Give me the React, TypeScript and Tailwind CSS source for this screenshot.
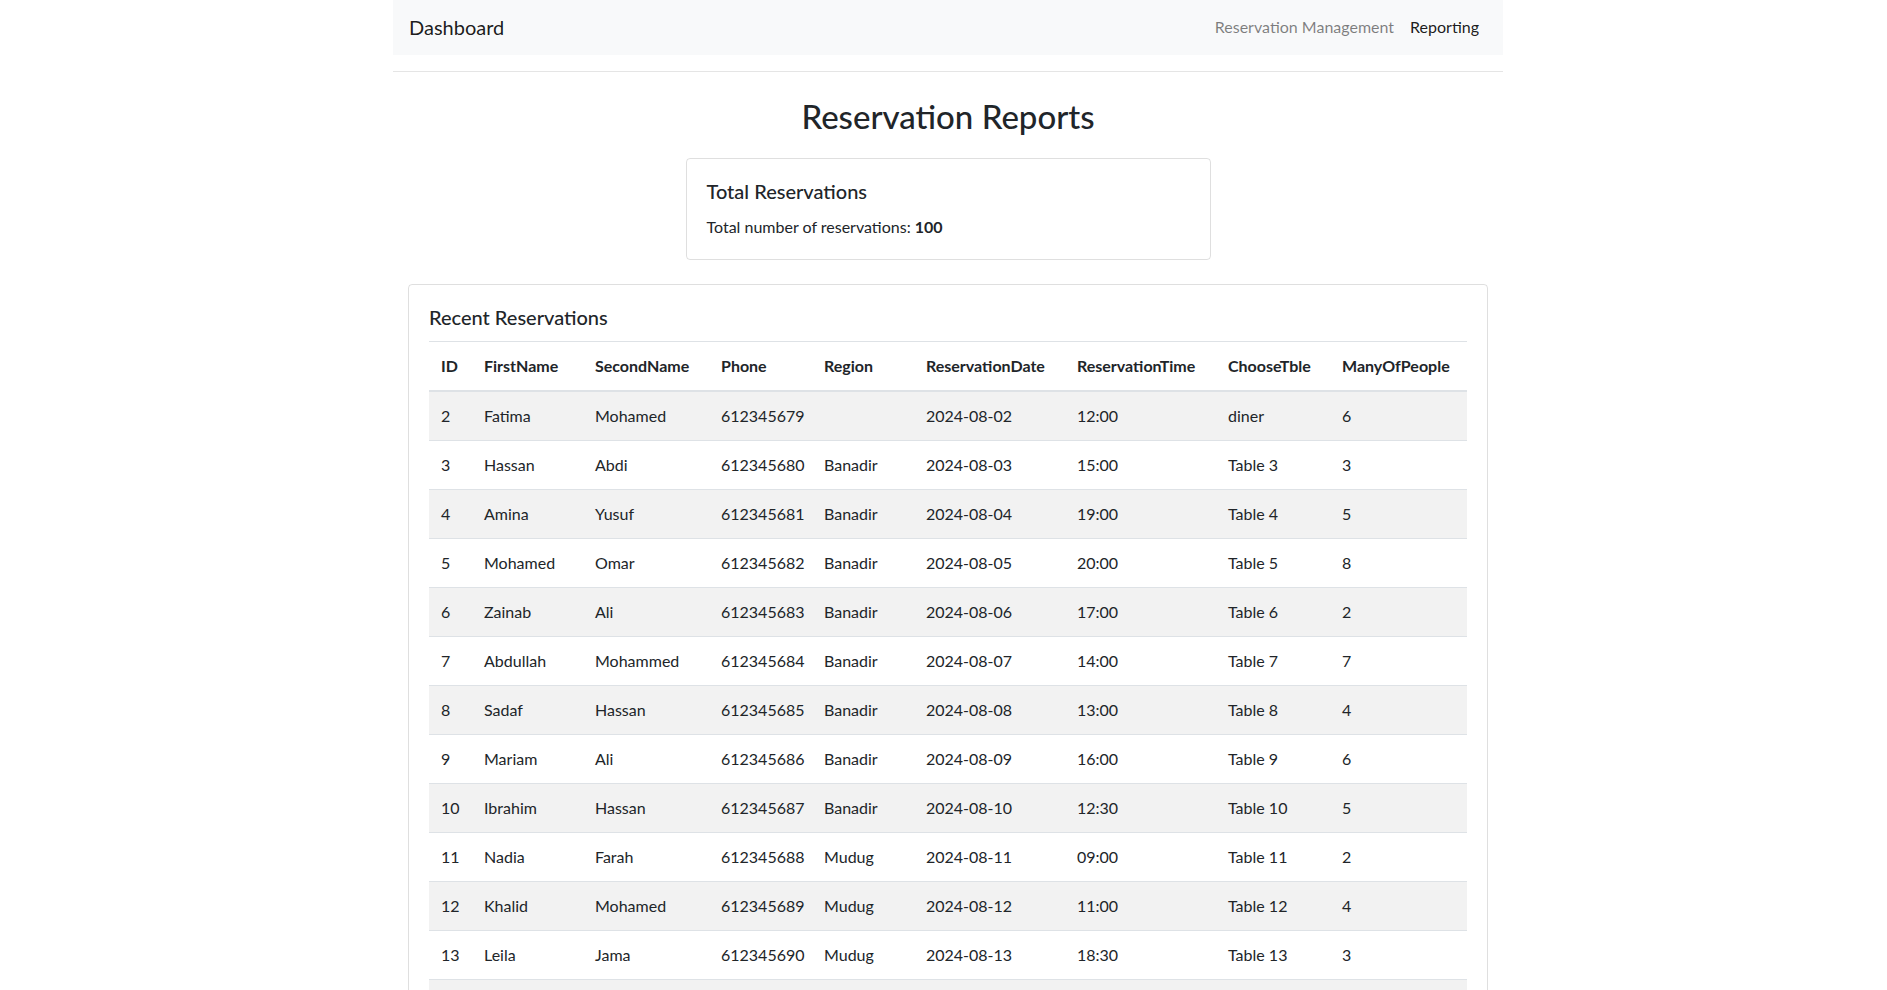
const ROWS = [
    ['2', 'Fatima', 'Mohamed', '612345679', '', '2024-08-02', '12:00', 'diner', '6'],
    ['3', 'Hassan', 'Abdi', '612345680', 'Banadir', '2024-08-03', '15:00', 'Table 3', '3'],
    ['4', 'Amina', 'Yusuf', '612345681', 'Banadir', '2024-08-04', '19:00', 'Table 4', '5'],
    ['5', 'Mohamed', 'Omar', '612345682', 'Banadir', '2024-08-05', '20:00', 'Table 5', '8'],
    ['6', 'Zainab', 'Ali', '612345683', 'Banadir', '2024-08-06', '17:00', 'Table 6', '2'],
    ['7', 'Abdullah', 'Mohammed', '612345684', 'Banadir', '2024-08-07', '14:00', 'Table 7', '7'],
    ['8', 'Sadaf', 'Hassan', '612345685', 'Banadir', '2024-08-08', '13:00', 'Table 8', '4'],
    ['9', 'Mariam', 'Ali', '612345686', 'Banadir', '2024-08-09', '16:00', 'Table 9', '6'],
    ['10', 'Ibrahim', 'Hassan', '612345687', 'Banadir', '2024-08-10', '12:30', 'Table 10', '5'],
    ['11', 'Nadia', 'Farah', '612345688', 'Mudug', '2024-08-11', '09:00', 'Table 11', '2'],
    ['12', 'Khalid', 'Mohamed', '612345689', 'Mudug', '2024-08-12', '11:00', 'Table 12', '4'],
    ['13', 'Leila', 'Jama', '612345690', 'Mudug', '2024-08-13', '18:30', 'Table 13', '3'],
];

const HEADERS = ['ID', 'FirstName', 'SecondName', 'Phone', 'Region', 'ReservationDate', 'ReservationTime', 'ChooseTble', 'ManyOfPeople'];

export default function App() {
    return (
        <div
            className="min-h-screen bg-white text-[#212529] text-base leading-6"
            style={{ fontFamily: "Lato, 'Noto Sans', sans-serif" }}
        >
            <div className="mx-auto w-[1149px] pl-[24px] pr-[15px]">
                {/* navbar */}
                <nav className="flex h-[55px] items-center justify-between bg-[#f8f9fa] px-4 pb-[2px]">
                    <span className="text-[20px] leading-[30px] text-black/90">Dashboard</span>
                    <div className="flex">
                        <a className="px-2 text-black/50">Reservation Management</a>
                        <a className="px-2 text-black/90">Reporting</a>
                    </div>
                </nav>
                <hr className="mt-4 border-0 border-t border-black/10" />

                <h2 className="mt-[25px] mb-[23px] text-center text-[33px] font-medium leading-[38px]">Reservation Reports</h2>

                {/* summary card */}
                <div className="mx-auto w-[525px] rounded border border-black/[0.125] p-5">
                    <h5 className="mb-3 text-[20px] font-medium leading-6">Total Reservations</h5>
                    <p>
                        Total number of reservations: <strong className="font-bold">100</strong>
                    </p>
                </div>

                {/* recent reservations */}
                <div className="mx-[15px] mt-6 rounded border border-black/[0.125] p-5">
                    <h5 className="mb-3 text-[20px] font-medium leading-6">Recent Reservations</h5>
                    <table className="w-full table-fixed border-collapse">
                        <colgroup>
                            <col className="w-[43px]" />
                            <col className="w-[111px]" />
                            <col className="w-[126px]" />
                            <col className="w-[103px]" />
                            <col className="w-[102px]" />
                            <col className="w-[151px]" />
                            <col className="w-[151px]" />
                            <col className="w-[114px]" />
                            <col />
                        </colgroup>
                        <thead>
                            <tr>
                                {HEADERS.map(h => (
                                    <th
                                        key={h}
                                        className="border-t border-b-2 border-[#dee2e6] p-3 text-left align-bottom font-bold whitespace-nowrap"
                                    >
                                        {h}
                                    </th>
                                ))}
                            </tr>
                        </thead>
                        <tbody>
                            {ROWS.map((row, i) => (
                                <tr key={row[0]} className={i % 2 === 0 ? 'bg-[#f2f2f2]' : 'bg-white'}>
                                    {row.map((cell, j) => (
                                        <td key={j} className="border-t border-[#dee2e6] p-3 align-top whitespace-nowrap">
                                            {cell}
                                        </td>
                                    ))}
                                </tr>
                            ))}
                            {/* next striped row peeks in at the bottom edge */}
                            <tr className="bg-[#f2f2f2]">
                                <td colSpan={9} className="h-[49px] border-t border-[#dee2e6]" />
                            </tr>
                        </tbody>
                    </table>
                </div>
            </div>
        </div>
    );
}
